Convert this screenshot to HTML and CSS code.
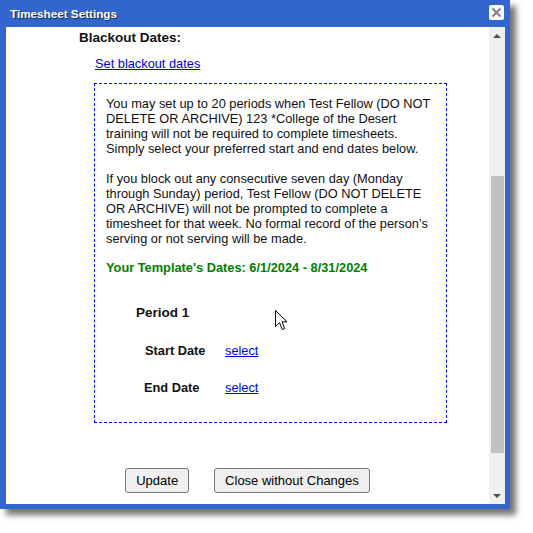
FILE: index.html
```html
<!DOCTYPE html>
<html lang="en">
<head>
<meta charset="utf-8">
<title>Timesheet Settings</title>
<link rel="stylesheet" href="styles.css">
</head>
<body>
<div class="dialog">
  <div class="titlebar">
    <span class="title">Timesheet Settings</span>
    <span class="close" aria-label="Close">
      <svg width="15" height="15" viewBox="0 0 15 15"><path d="M3.5 3.5 L11.5 11.5 M11.5 3.5 L3.5 11.5" stroke="#858585" stroke-width="2.2" fill="none"/></svg>
    </span>
  </div>
  <div class="body">
    <div class="main">
      <h2 class="heading">Blackout Dates:</h2>
      <div class="section">
        <a class="link" href="#">Set blackout dates</a>
        <div class="box">
          <p>You may set up to 20 periods when Test Fellow (DO NOT DELETE OR ARCHIVE) 123 *College of the Desert training will not be required to complete timesheets. Simply select your preferred start and end dates below.</p>
          <p class="para">If you block out any consecutive seven day (Monday through Sunday) period, Test Fellow (DO NOT DELETE OR ARCHIVE) will not be prompted to complete a timesheet for that week. No formal record of the person's serving or not serving will be made.</p>
          <p class="dates">Your Template's Dates: 6/1/2024 - 8/31/2024</p>
          <div class="period">
            <div class="period-title">Period 1</div>
            <div class="period-row start"><span class="label">Start Date</span><a class="select" href="#">select</a></div>
            <div class="period-row end"><span class="label">End Date</span><a class="select" href="#">select</a></div>
          </div>
        </div>
      </div>
      <div class="actions">
        <button class="btn" type="button">Update</button>
        <button class="btn" type="button">Close without Changes</button>
      </div>
    </div>
    <div class="scrollbar">
      <div class="sb-btn"><span class="arrow up"></span></div>
      <div class="track"><div class="thumb"></div></div>
      <div class="sb-btn"><span class="arrow down"></span></div>
    </div>
  </div>
</div>
<svg class="cursor" width="13" height="21" viewBox="0 0 13 21"><path d="M0.5 0.5 L0.5 16.5 L4.5 12.7 L7.3 19.5 L9.7 18.5 L7 11.8 L12 11.8 Z" fill="#fff" stroke="#000" stroke-width="1" stroke-linejoin="miter"/></svg>
</body>
</html>
```
FILE: styles.css
```css
html, body {
  margin: 0;
  padding: 0;
  background: #ffffff;
}
body {
  font-family: "Liberation Sans", Arial, sans-serif;
  color: #111;
  position: relative;
  width: 533px;
  height: 533px;
  overflow: hidden;
}
.dialog {
  width: 510px;
  box-sizing: border-box;
  background: #3366cc;
  padding: 0 5px 5px 6px;
  box-shadow: 6px 6px 6px rgba(0, 0, 0, 0.55);
}
.titlebar {
  height: 27px;
  display: flex;
  align-items: center;
  justify-content: space-between;
  padding-left: 4px;
  padding-right: 1px;
}
.title {
  color: #fff;
  font-weight: bold;
  font-size: 11.7px;
  line-height: 14px;
  text-shadow: 1px 1px 1px #14254a;
  margin-top: 1px;
}
.close {
  width: 15px;
  height: 15px;
  background: #fff;
  border-radius: 2px;
  display: flex;
  margin-top: -3px;
}
.body {
  display: flex;
  height: 477px;
  background: #fff;
}
.main {
  width: 483px;
  padding-top: 3px;
  box-sizing: border-box;
  overflow: hidden;
}
.heading {
  margin: 0 0 0 73px;
  font-size: 13.5px;
  line-height: 16px;
  font-weight: bold;
  color: #111;
}
.section {
  margin-left: 88px;
}
.link {
  display: block;
  margin-top: 10px;
  padding-left: 1px;
  font-size: 12.8px;
  line-height: 15px;
  color: #0000ee;
}
.box {
  margin-top: 12px;
  width: 353px;
  box-sizing: border-box;
  border: 1px dashed #0000ff;
  padding: 12px 10px 27px 11px;
  font-size: 12.8px;
  line-height: 15px;
}
.box p {
  margin: 0;
}
.box .para {
  margin-top: 15px;
}
.box .dates {
  margin-top: 14px;
  font-weight: bold;
  color: #008000;
}
.period {
  margin-top: 30px;
  margin-left: 30px;
}
.period-title {
  font-weight: bold;
  font-size: 13.5px;
  line-height: 16px;
}
.period-row {
  display: flex;
  padding-left: 9px;
  margin-top: 22px;
}
.period-row.end {
  margin-top: 22px;
  padding-left: 8px;
}
.label {
  font-weight: bold;
  width: 80px;
}
.period-row.end .label {
  width: 81px;
}
.select {
  color: #0000ee;
}
.actions {
  display: flex;
  justify-content: center;
  gap: 25px;
  margin-top: 45px;
}
.btn {
  height: 25px;
  padding: 0 10px;
  font-family: "Liberation Sans", Arial, sans-serif;
  font-size: 13px;
  color: #000;
  background: #efefef;
  border: 1px solid #767676;
  border-radius: 3px;
}
.scrollbar {
  width: 16px;
  background: #f0f0f0;
  display: flex;
  flex-direction: column;
}
.sb-btn {
  height: 17px;
  display: flex;
  align-items: center;
  justify-content: center;
}
.arrow {
  width: 0;
  height: 0;
  border-left: 4px solid transparent;
  border-right: 4px solid transparent;
}
.arrow.up {
  border-bottom: 4px solid #505050;
}
.arrow.down {
  border-top: 4px solid #505050;
}
.track {
  flex: 1;
  padding: 0 1px 0 2px;
}
.thumb {
  margin-top: 132px;
  height: 277px;
  background: #c1c1c1;
}
.cursor {
  position: absolute;
  left: 275px;
  top: 310px;
}
```
